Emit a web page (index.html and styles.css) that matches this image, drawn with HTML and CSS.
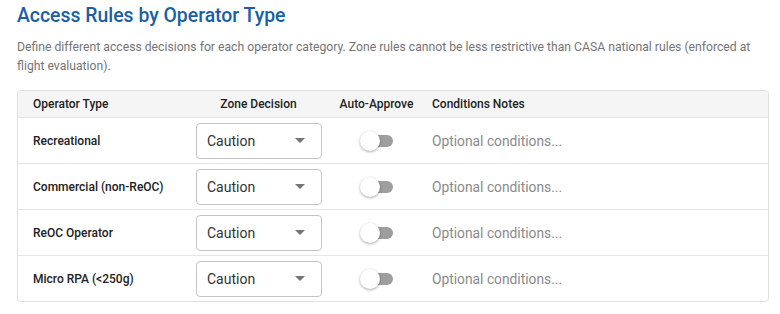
FILE: index.html
```html
<!DOCTYPE html>
<html>
<head>
<meta charset="utf-8">
<link rel="stylesheet" href="styles.css">
</head>
<body>
<div class="page">
  <h2 class="title">Access Rules by Operator Type</h2>
  <p class="desc">Define different access decisions for each operator category. Zone rules cannot be less restrictive than CASA national rules (enforced at flight evaluation).</p>
  <div class="tbl">
    <div class="row head">
      <div class="c op">Operator Type</div>
      <div class="c zone center">Zone Decision</div>
      <div class="c auto center">Auto-Approve</div>
      <div class="c notes">Conditions Notes</div>
    </div>
    <div class="row">
      <div class="c op name">Recreational</div>
      <div class="c zone"><div class="sel"><span>Caution</span><i class="arrow"></i></div></div>
      <div class="c auto center"><div class="tog"><span class="thumb"></span></div></div>
      <div class="c notes ph">Optional conditions...</div>
    </div>
    <div class="row">
      <div class="c op name">Commercial (non-ReOC)</div>
      <div class="c zone"><div class="sel"><span>Caution</span><i class="arrow"></i></div></div>
      <div class="c auto center"><div class="tog"><span class="thumb"></span></div></div>
      <div class="c notes ph">Optional conditions...</div>
    </div>
    <div class="row">
      <div class="c op name">ReOC Operator</div>
      <div class="c zone"><div class="sel"><span>Caution</span><i class="arrow"></i></div></div>
      <div class="c auto center"><div class="tog"><span class="thumb"></span></div></div>
      <div class="c notes ph">Optional conditions...</div>
    </div>
    <div class="row">
      <div class="c op name">Micro RPA (&lt;250g)</div>
      <div class="c zone"><div class="sel"><span>Caution</span><i class="arrow"></i></div></div>
      <div class="c auto center"><div class="tog"><span class="thumb"></span></div></div>
      <div class="c notes ph">Optional conditions...</div>
    </div>
  </div>
</div>
</body>
</html>
```
FILE: styles.css
```css
* { box-sizing: border-box; }
html, body { margin: 0; padding: 0; background: #fff; }
body { font-family: Roboto, "Noto Sans", Arial, sans-serif; color: #222; }
.page { padding: 4px 11px 0 17px; }
.title { margin: 0; font-size: 19.4px; font-weight: 500; color: #1a5fa6; line-height: 24px; }
.desc { margin: 10px 0 0; font-size: 12.2px; line-height: 19px; color: #757575; }
.tbl { margin-top: 14px; border: 1px solid #e0e0e0; border-radius: 4px; overflow: hidden; width: 752px; }
.row { display: flex; align-items: center; height: 46px; border-top: 1px solid #e6e6e6; }
.row.head { height: 26px; border-top: none; background: #f5f5f5; font-size: 12px; font-weight: 500; color: #222; }
.c { padding: 0 10px; white-space: nowrap; }
.op { width: 168px; padding-left: 15px; }
.zone { width: 145px; }
.auto { width: 91px; padding: 0; }
.notes { flex: 1; }
.center { text-align: center; }
.name { font-size: 12px; font-weight: 500; color: #222; }
.sel { width: 126px; height: 36px; border: 1px solid #c4c4c4; border-radius: 4px; display: flex; align-items: center; justify-content: space-between; padding: 0 16px 0 10px; font-size: 14px; color: #333; }
.arrow { width: 0; height: 0; border-left: 5px solid transparent; border-right: 5px solid transparent; border-top: 5px solid #757575; }
.tog { position: relative; width: 30px; height: 12px; border-radius: 6px; background: #9e9e9e; margin: 0 auto; left: 1px; }
.thumb { position: absolute; left: -3px; top: -4px; width: 20px; height: 20px; border-radius: 50%; background: #fff; box-shadow: 0 1px 3px rgba(0,0,0,0.35); }
.ph { font-size: 13.8px; color: #8a8a8a; }
```
